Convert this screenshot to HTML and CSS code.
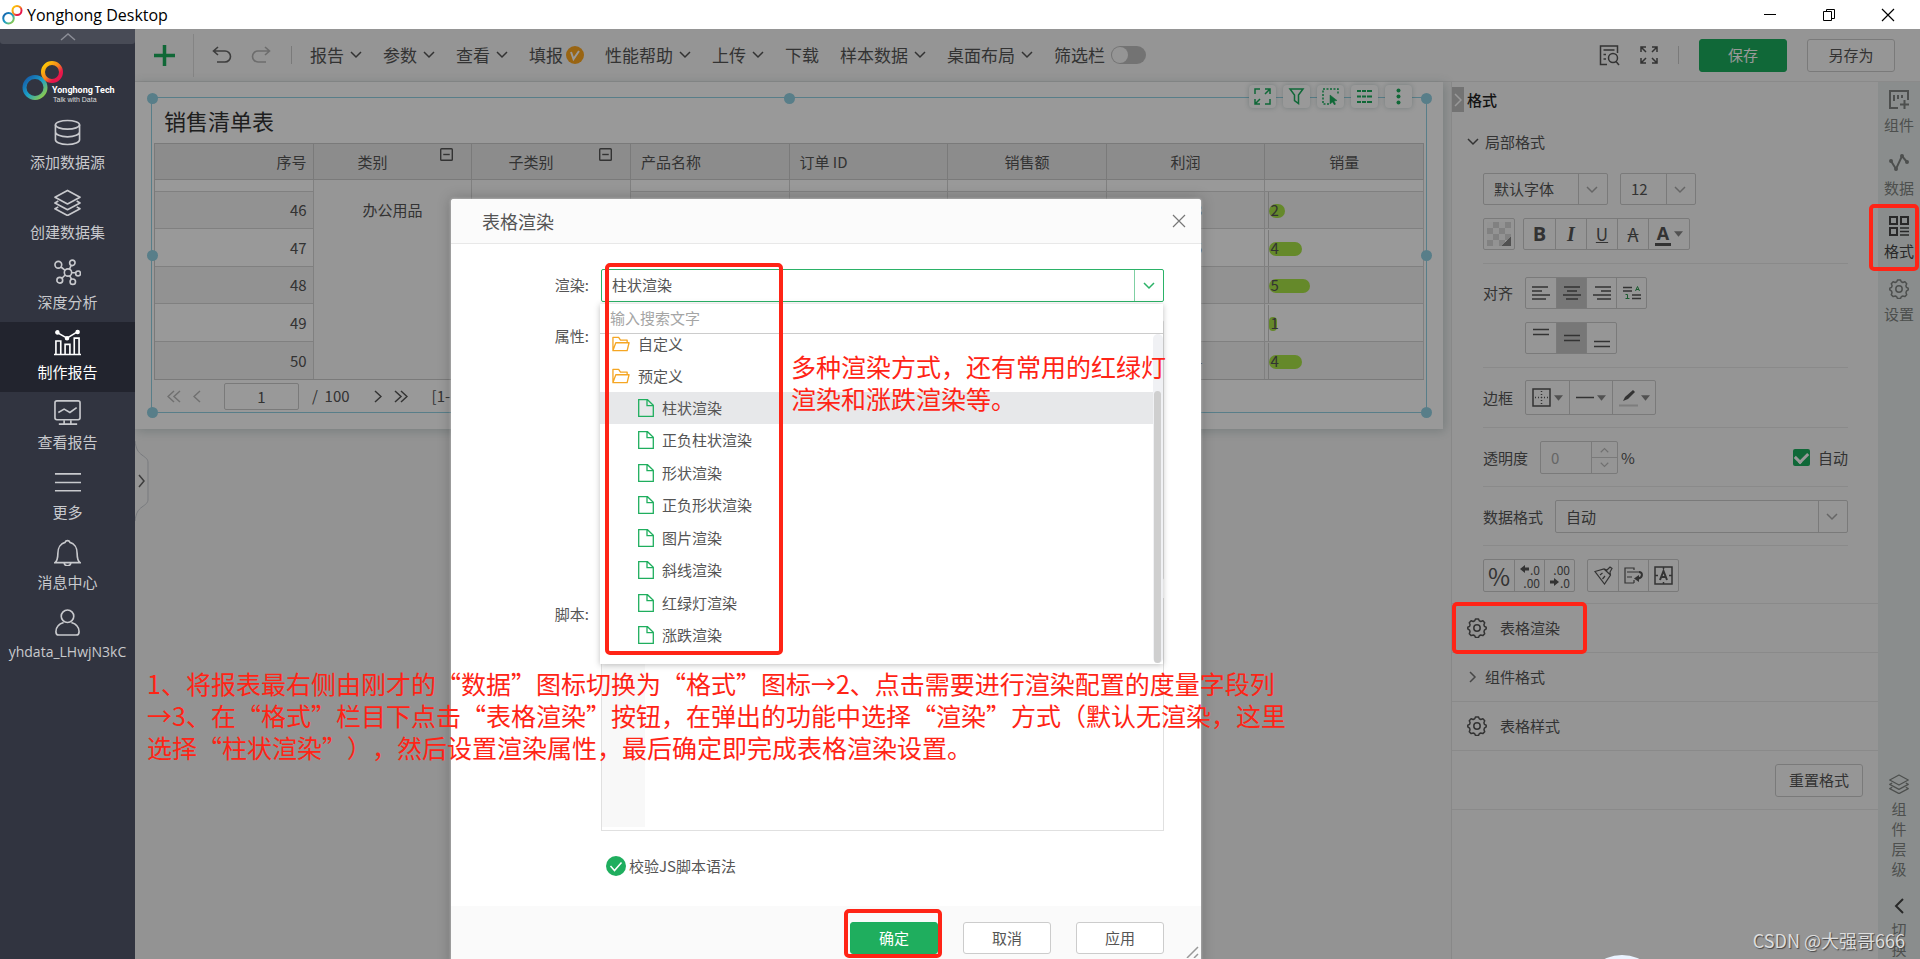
FILE: index.html
```html
<!DOCTYPE html>
<html lang="zh-CN">
<head>
<meta charset="utf-8">
<title>Yonghong Desktop</title>
<link rel="stylesheet" href="styles.css">
</head>
<body>
<svg class="defs" aria-hidden="true">
  <defs>
    <linearGradient id="warm" x1="0" y1="0" x2="1" y2="1"><stop offset="0" stop-color="#ffd400"/><stop offset=".5" stop-color="#f58220"/><stop offset=".75" stop-color="#e6174b"/><stop offset="1" stop-color="#e6174b"/></linearGradient>
    <linearGradient id="cool" x1="0" y1="0" x2="1" y2="1"><stop offset="0" stop-color="#1556a6"/><stop offset=".5" stop-color="#1ba0c8"/><stop offset="1" stop-color="#a4d233"/></linearGradient>
    <symbol id="rings" viewBox="0 0 42 40"><circle cx="13" cy="26.500" r="10.500" fill="none" stroke="url(#cool)" stroke-width="4"/><circle cx="30" cy="11" r="9" fill="none" stroke="url(#warm)" stroke-width="4"/></symbol>
    <symbol id="down" viewBox="0 0 12 8"><path d="M1 1l5 5 5-5" fill="none" stroke="currentColor" stroke-width="1.500"/></symbol>
    <symbol id="tri" viewBox="0 0 10 6"><path d="M0 0h10L5 6z" fill="#888"/></symbol>
    <symbol id="gear" viewBox="0 0 20 20"><path d="M7.700 2.800 8.600.9h2.800l.9 1.900 1.500.7 2.100-.7 1.800 2-.8 2 .5 1.600 1.800.8v1.700l-1.800 1.200-.4 1.600.7 2-1.900 1.900-2-.6-1.500.7-.9 1.900H8.600l-.9-1.900-1.500-.7-2 .6-1.900-1.900.7-2-.4-1.600-1.800-1.200V9.200l1.800-.8.5-1.600-.8-2 1.800-2 2.100.7z" fill="none" stroke="currentColor" stroke-width="1.500" stroke-linejoin="round"/><circle cx="10" cy="10" r="3.200" fill="none" stroke="currentColor" stroke-width="1.500"/></symbol>
    <symbol id="file" viewBox="0 0 16 18"><path d="M.7.7H9.500l5.800 5.600v11H.7zM9 .7v6h6.300" fill="none" stroke="#1fae5e" stroke-width="1.300"/></symbol>
    <symbol id="folder" viewBox="0 0 19 16"><path d="M1 15V1h6l2 3h7v3M1 15l3-8.300h14L16 15z" fill="none" stroke="#f5a623" stroke-width="1.400" stroke-linejoin="round"/></symbol>
    <symbol id="layers" viewBox="0 0 28 28"><path d="M14 1.500l13 7-13 7-13-7zM4.500 12.500L1 14.500l13 7 13-7-3.500-2M4.500 18.500L1 20.500l13 7 13-7-3.500-2" fill="none" stroke="currentColor" stroke-width="1.700" stroke-linejoin="round"/></symbol>
    <symbol id="minus" viewBox="0 0 14 14"><rect x=".75" y=".75" width="12.500" height="12.500" rx="1" fill="none" stroke="#555" stroke-width="1.500"/><path d="M3.500 7h7" stroke="#555" stroke-width="1.500"/></symbol>
  </defs>
</svg>

<header class="titlebar">
  <svg class="titlebar-logo"><use href="#rings"/></svg>
  <h1 class="titlebar-name">Yonghong Desktop</h1>
  <div class="window-buttons">
    <button aria-label="最小化"><svg width="14" height="14"><path d="M1 6.500h12" stroke="#000"/></svg></button>
    <button aria-label="还原"><svg width="14" height="14"><path d="M1.500 3.500h8v9h-8zM4.500 3.500v-2h8v9h-3" fill="none" stroke="#000"/></svg></button>
    <button aria-label="关闭"><svg width="14" height="14"><path d="M1 1l12 12M13 1L1 13" stroke="#000" stroke-width="1.200"/></svg></button>
  </div>
</header>

<div class="app">
  <nav class="sidebar">
    <button class="sidebar-fold" aria-label="收起"><svg width="16" height="8"><path d="M1 7l7-6 7 6" fill="none" stroke="#8b8d96" stroke-width="1.500"/></svg></button>
    <svg class="brand" viewBox="0 0 135 68" role="img" aria-label="Yonghong Tech">
      <use href="#rings" x="22" y="17" width="42" height="40"/>
      <text x="52" y="49" class="brand-name">Yonghong Tech</text>
      <text x="53" y="58" class="brand-motto">Talk with Data</text>
    </svg>
    <a class="nav-item" href="#"><svg viewBox="0 0 28 28"><ellipse cx="14" cy="6" rx="12.500" ry="4.500"/><path d="M1.500 6v15.500c0 2.500 5 5 12.500 5s12.500-2.500 12.500-5V6M1.500 13.500c0 2.500 5 5 12.500 5s12.500-2.500 12.500-5"/></svg><span>添加数据源</span></a>
    <a class="nav-item" href="#"><svg><use href="#layers"/></svg><span>创建数据集</span></a>
    <a class="nav-item" href="#"><svg viewBox="0 0 28 28"><circle cx="14.500" cy="14" r="3.800"/><circle cx="4.500" cy="6" r="3.500"/><circle cx="19" cy="4" r="2.800"/><circle cx="25" cy="15" r="2.500"/><circle cx="19.500" cy="23.500" r="2.800"/><circle cx="6" cy="22" r="3"/><path d="M7.200 8.300l4.400 3.400M17.800 6.600l-1.800 4M18.300 14.300h4.200M16.200 17.300l2 3.700M11.600 16.600L8.200 20"/></svg><span>深度分析</span></a>
    <a class="nav-item nav-active" href="#"><svg viewBox="0 0 28 28"><path d="M0 26.500h28M2 26V12.500h5V26M11.500 26V16h5v10M21 26V9.500h5V26M3 3.500l10.500 6L25 2.500"/><circle cx="3.500" cy="3.500" r="1.500" fill="#fff"/><circle cx="13.500" cy="9.500" r="1.500" fill="#fff"/><circle cx="24.500" cy="3" r="1.500" fill="#fff"/></svg><span>制作报告</span></a>
    <a class="nav-item" href="#"><svg viewBox="0 0 28 28"><rect x="1" y="2" width="26" height="19.500" rx="2"/><path d="M4.500 14l6-3.500 6 3.500 7-5M10.500 22v3.500M17.500 22v3.500M5 26h19"/></svg><span>查看报告</span></a>
    <a class="nav-item" href="#"><svg viewBox="0 0 28 28"><path d="M1 5h27M1 14h27M1 22.500h27"/></svg><span>更多</span></a>
    <a class="nav-item" href="#"><svg viewBox="0 0 28 28"><path d="M1 24.500c2.500-2 3-4 3-9.500 0-6 3-10.500 7.500-11.500a2.600 2.600 0 0 1 5 0C21 4.500 24 9 24 15c0 5.500.5 7.500 3 9.500zM10.500 25a3.600 3.600 0 0 0 7 0"/></svg><span>消息中心</span></a>
    <a class="nav-item" href="#"><svg viewBox="0 0 28 28"><circle cx="14" cy="7.500" r="6.500"/><path d="M10 14c-5 1.500-8 5-8 9.500 0 2.500 1 3.500 3 3.500h18c2 0 3-1 3-3.500 0-4.500-3-8-8-9.500"/></svg><span class="user">yhdata_LHwjN3kC</span></a>
  </nav>

  <div class="workspace">
    <div class="toolbar">
      <button class="tool-add" aria-label="新建"><svg width="21" height="21"><path d="M10.500 0v21M0 10.500h21" stroke="#1bad5d" stroke-width="3.500"/></svg></button>
      <button class="tool-undo" aria-label="撤销"><svg width="20" height="18"><path d="M6 1L1.500 5 6 9M1.500 5H13a5.500 5.500 0 0 1 0 11H5" fill="none" stroke="#666" stroke-width="1.600"/></svg></button>
      <button class="tool-redo" aria-label="重做"><svg width="20" height="18"><path d="M14 1l4.500 4L14 9M18.500 5H7a5.500 5.500 0 0 0 0 11h8" fill="none" stroke="#b5b5b5" stroke-width="1.600"/></svg></button>
      <div class="menus">
        <button>报告<svg class="chev"><use href="#down"/></svg></button>
        <button>参数<svg class="chev"><use href="#down"/></svg></button>
        <button>查看<svg class="chev"><use href="#down"/></svg></button>
        <button class="menu-vip">填报<svg width="18" height="18"><circle cx="9" cy="9" r="9" fill="#ffa820"/><path d="M5 6l2.500 7L13 5" fill="none" stroke="#fff" stroke-width="2"/></svg></button>
        <button>性能帮助<svg class="chev"><use href="#down"/></svg></button>
        <button>上传<svg class="chev"><use href="#down"/></svg></button>
        <button>下载</button>
        <button>样本数据<svg class="chev"><use href="#down"/></svg></button>
        <button>桌面布局<svg class="chev"><use href="#down"/></svg></button>
        <label class="switch">筛选栏<input type="checkbox" role="switch"></label>
      </div>
      <div class="toolbar-end">
        <button aria-label="预览"><svg width="21" height="21" fill="none" stroke="#555" stroke-width="1.500"><path d="M18.500 8V1h-17v18.500H8M4.500 5h11M4.500 9.500H7M4.500 14H7"/><circle cx="14" cy="13" r="4.500"/><path d="M17 16.500l3 3.500"/></svg></button>
        <button aria-label="全屏"><svg width="18" height="18" fill="none" stroke="#555" stroke-width="1.500"><path d="M1 6V1h5M1 1l5 5M12 1h5v5M17 1l-5 5M1 12v5h5M1 17l5-5M12 17h5v-5M17 17l-5-5"/></svg></button>
        <i class="tool-rule"></i>
        <button class="btn btn-primary">保存</button>
        <button class="btn">另存为</button>
      </div>
    </div>

    <div class="stage">
      <main class="canvas">
        <div class="sheet">
          <section class="widget">
            <i class="grip g-nw"></i><i class="grip g-n"></i><i class="grip g-ne"></i><i class="grip g-w"></i><i class="grip g-e"></i><i class="grip g-sw"></i><i class="grip g-se"></i>
            <div class="widget-tools">
              <button aria-label="放大"><svg width="17" height="17"><path d="M1 6V1h5M11 1h5v5M16 1l-5 5M1 11v5h5M1 16l5-5M11 16h5v-5"/></svg></button>
              <button aria-label="筛选"><svg width="17" height="17"><path d="M2 1h13l-4.500 6v8.500l-4-3V7z"/></svg></button>
              <button aria-label="选择"><svg width="17" height="17"><path d="M7 16H1V1h15v5" stroke-dasharray="2 1.500"/><path d="M8 7v9l2.500-2 2 3 1-1-1.500-3 3-.5z" fill="#1bad5d" stroke-width=".5"/></svg></button>
              <button aria-label="列表"><svg width="17" height="17"><path d="M1 3h4M6 3h4M11 3h5M1 8.500h4M6 8.500h4M11 8.500h5M1 14h4M6 14h4M11 14h5" stroke-width="2"/></svg></button>
              <button aria-label="更多"><svg width="17" height="17" class="dots"><circle cx="8.500" cy="2.500" r="2"/><circle cx="8.500" cy="8.500" r="2"/><circle cx="8.500" cy="14.500" r="2"/></svg></button>
            </div>
            <h2 class="widget-title">销售清单表</h2>
            <table class="grid">
              <thead>
                <tr><th class="end">序号</th><th class="fold">类别<svg><use href="#minus"/></svg></th><th class="fold">子类别<svg><use href="#minus"/></svg></th><th class="start">产品名称</th><th class="start">订单 ID</th><th>销售额</th><th>利润</th><th>销量</th></tr>
              </thead>
              <tbody>
                <tr class="cut"><td></td><td rowspan="6" class="group">办公用品</td><td rowspan="6" class="group"></td><td></td><td></td><td></td><td></td><td></td></tr>
                <tr class="shade"><td class="end">46</td><td></td><td></td><td></td><td class="profit">3</td><td class="meter"><div><i style="width:16px"></i>2</div></td></tr>
                <tr><td class="end">47</td><td></td><td></td><td></td><td class="profit">5</td><td class="meter"><div><i style="width:33px"></i>4</div></td></tr>
                <tr class="shade"><td class="end">48</td><td></td><td></td><td></td><td></td><td class="meter"><div><i style="width:41px"></i>5</div></td></tr>
                <tr><td class="end">49</td><td></td><td></td><td></td><td></td><td class="meter"><div><i style="width:8px"></i>1</div></td></tr>
                <tr class="shade"><td class="end">50</td><td></td><td></td><td></td><td class="profit">4</td><td class="meter"><div><i style="width:33px"></i>4</div></td></tr>
              </tbody>
            </table>
            <div class="pager">
              <button class="dim" aria-label="首页"><svg width="14" height="13"><path d="M7 1L1 6.500 7 12M13 1L7 6.500l6 5.500"/></svg></button>
              <button class="dim" aria-label="上一页"><svg width="8" height="13"><path d="M7 1L1 6.500 7 12"/></svg></button>
              <input type="text" value="1" aria-label="页码">
              <span class="pages">/&nbsp; 100</span>
              <button aria-label="下一页"><svg width="8" height="13"><path d="M1 1l6 5.500L1 12"/></svg></button>
              <button aria-label="末页"><svg width="14" height="13"><path d="M1 1l6 5.500L1 12M7 1l6 5.500L7 12"/></svg></button>
              <span class="range">[1-</span>
            </div>
          </section>
        </div>
        <button class="drawer" aria-label="展开"><svg width="14" height="82"><path d="M0 1c1 8 3 11 7 14 4 3 6 4 6 8v36c0 4-2 5-6 8-4 3-6 6-7 14" fill="#f8f8f8" stroke="#c8cbd2"/><path d="M4 35l5 6-5 6" fill="none" stroke="#666" stroke-width="1.500"/></svg></button>
      </main>

      <aside class="panel">
        <div class="panel-head"><button class="panel-tab" aria-label="收起面板"><svg width="8" height="14"><path d="M1 1l6 6-6 6" fill="none" stroke="#fff" stroke-width="1.500"/></svg></button><h2>格式</h2></div>
        <button class="fold-row"><svg class="chev"><use href="#down"/></svg>局部格式</button>
        <div class="format">
          <div class="block block-font">
            <div class="line gap-12">
              <span class="pick w-font"><select aria-label="字体"><option>默认字体</option></select><svg class="chev"><use href="#down"/></svg></span>
              <span class="pick w-size"><select aria-label="字号"><option>12</option></select><svg class="chev"><use href="#down"/></svg></span>
            </div>
            <div class="line gap-8">
              <button class="swatch" aria-label="背景色"></button>
              <div class="seg">
                <button class="bold">B</button><button class="italic">I</button><button class="under">U</button><button class="strike">A</button><button class="color" aria-label="文字颜色"><span>A</span><svg class="tri"><use href="#tri"/></svg></button>
              </div>
            </div>
          </div>
          <div class="block block-align">
            <span class="label">对齐</span>
            <div class="stack">
              <div class="seg">
                <button aria-label="左对齐"><svg width="18" height="14"><path d="M0 1h16M0 5h10M0 9h18M0 13h14"/></svg></button><button class="on" aria-label="居中"><svg width="18" height="14"><path d="M1 1h16M4 5h10M0 9h18M3 13h12"/></svg></button><button aria-label="右对齐"><svg width="18" height="14"><path d="M2 1h16M8 5h10M0 9h18M4 13h14"/></svg></button><button aria-label="自动对齐"><svg width="18" height="14"><path d="M0 1.500h9M0 5h9M9 9h9M9 12.500h9"/><path d="M2.500 8.500h2v4M2.500 12.500h4M12.500 5l2-4.500L16.500 5M13 3.500h3" class="green"/></svg></button>
              </div>
              <div class="seg">
                <button aria-label="顶端"><svg width="16" height="20"><path d="M0 1.500h16M0 6.500h16"/></svg></button><button class="on" aria-label="中部"><svg width="16" height="20"><path d="M0 7.500h16M0 12.500h16"/></svg></button><button aria-label="底端"><svg width="16" height="20"><path d="M0 13.500h16M0 18.500h16"/></svg></button>
              </div>
            </div>
          </div>
          <div class="block">
            <span class="label">边框</span>
            <div class="seg seg-wide">
              <button aria-label="边框样式"><svg width="19" height="19"><path d="M1 1h17v17H1z"/><path d="M9.500 3v14M3 9.500h14" stroke-dasharray="1 2"/></svg><svg class="tri"><use href="#tri"/></svg></button><button aria-label="线型"><svg width="18" height="19"><path d="M0 9.500h18"/></svg><svg class="tri"><use href="#tri"/></svg></button><button aria-label="边框颜色"><svg width="19" height="19"><path d="M4 13l2-4 8-7 2 2-7 7z" fill="#555" stroke-width="0"/><path d="M0 17.500h19" class="pale"/></svg><svg class="tri"><use href="#tri"/></svg></button>
            </div>
          </div>
          <div class="block block-opacity">
            <label class="label" for="opacity">透明度</label>
            <span class="stepper"><input id="opacity" type="text" value="0" disabled><span class="steps"><svg class="chev up"><use href="#down"/></svg><svg class="chev"><use href="#down"/></svg></span></span>
            <span class="unit">%</span>
            <label class="auto"><input type="checkbox" checked>自动</label>
          </div>
          <div class="block block-data">
            <label class="label" for="fmt">数据格式</label>
            <span class="pick w-fill"><select id="fmt"><option>自动</option></select><svg class="chev"><use href="#down"/></svg></span>
          </div>
          <div class="block block-tools gap-12">
            <div class="seg">
              <button class="percent">%</button><button class="digits" aria-label="增加小数"><span><svg width="9" height="8"><path d="M0 4l5-4v2.500h4v3H5V8z"/></svg>.0</span><span>.00</span></button><button class="digits" aria-label="减少小数"><span>.00</span><span><svg width="9" height="8"><path d="M9 4L4 0v2.500H0v3h4V8z"/></svg>.0</span></button>
            </div>
            <div class="seg">
              <button aria-label="格式刷"><svg width="19" height="19"><path d="M1 5.500L10 3l3 1 3-3 2 1.500-2 3.500.5 3L10.500 18zM10 3l6.500 6M6 9l2.500-2M8.500 13l2.500-3" stroke-width="1.200"/></svg></button><button aria-label="换行"><svg width="20" height="19"><path d="M10 17H1V2h9v2M10 14v3M3 6h12M3 11h5" stroke-width="1.200"/><path d="M15 6c3.500 0 4.500 5-.5 6.500" stroke-width="2"/><path d="M15 9v7l-5-3.500z" class="solid"/></svg></button><button aria-label="自适应"><svg width="19" height="19"><path d="M1 1h17v17H1zM1 9.500h3M15 9.500h3M9.500 1v2M9.500 16v2"/><path d="M6 14l3.500-9L13 14M7.500 11h4" stroke-width="2"/></svg></button>
            </div>
          </div>
        </div>
        <button class="panel-row"><svg class="gear"><use href="#gear"/></svg>表格渲染</button>
        <button class="panel-row panel-fold"><svg width="8" height="12"><path d="M1 1l5 5-5 5" fill="none" stroke="#777" stroke-width="1.500"/></svg>组件格式</button>
        <button class="panel-row"><svg class="gear"><use href="#gear"/></svg>表格样式</button>
        <div class="panel-reset"><button class="btn">重置格式</button></div>
      </aside>

      <nav class="rail">
        <button><svg width="20" height="20" viewBox="0 0 20 20"><path d="M19 10V1H1v17h8M5 5v6M9 5v4M13 5v3M11 14.500h9M15.500 10v9"/></svg>组件</button>
        <button><svg width="20" height="20" viewBox="0 0 20 20"><path d="M2 8l5 8 6-13 5 6"/><circle cx="2" cy="8" r="1"/><circle cx="7" cy="16" r="1"/><circle cx="13" cy="3" r="1"/><circle cx="18" cy="9" r="1"/></svg>数据</button>
        <button class="rail-on"><svg width="20" height="20" viewBox="0 0 20 20"><path d="M1 1h7v7H1zM12 1h7v7h-7zM1 12h7v7H1z"/><path d="M11 12h9M11 15.500h9M11 19h9" stroke-width="1.500"/></svg>格式</button>
        <button><svg width="20" height="20"><use href="#gear"/></svg>设置</button>
        <div class="rail-low">
          <button class="tall"><svg width="20" height="20"><use href="#layers"/></svg><span>组件层级</span></button>
          <button class="tall"><svg width="10" height="16"><path d="M9 1L2 8l7 7" stroke="#444"/></svg><span>切换图</span></button>
        </div>
      </nav>
    </div>

    <div class="mask"></div>
    <i class="bubble"></i>

    <section class="dialog" role="dialog" aria-labelledby="dlg-title">
      <header class="dialog-head"><h2 id="dlg-title">表格渲染</h2><button aria-label="关闭对话框"><svg width="14" height="14"><path d="M1 1l12 12M13 1L1 13" stroke="#777" stroke-width="1.200"/></svg></button></header>
      <div class="form">
        <label for="render">渲染:</label>
        <div class="combo">
          <input id="render" type="text" value="柱状渲染"><button aria-label="展开选项"><svg class="chev"><use href="#down"/></svg></button>
          <div class="drop">
            <input class="drop-search" type="text" placeholder="输入搜索文字" aria-label="输入搜索文字">
            <ul class="tree">
              <li class="dir"><svg><use href="#folder"/></svg>自定义</li>
              <li class="dir"><svg><use href="#folder"/></svg>预定义</li>
              <li class="picked"><svg><use href="#file"/></svg>柱状渲染</li>
              <li><svg><use href="#file"/></svg>正负柱状渲染</li>
              <li><svg><use href="#file"/></svg>形状渲染</li>
              <li><svg><use href="#file"/></svg>正负形状渲染</li>
              <li><svg><use href="#file"/></svg>图片渲染</li>
              <li><svg><use href="#file"/></svg>斜线渲染</li>
              <li><svg><use href="#file"/></svg>红绿灯渲染</li>
              <li><svg><use href="#file"/></svg>涨跌渲染</li>
            </ul>
            <i class="scroll"></i>
          </div>
        </div>
        <span class="form-label">属性:</span>
        <div class="props"></div>
        <label for="script">脚本:</label>
        <div class="editor"><i class="gutter"></i><textarea id="script"></textarea></div>
        <button class="verify"><svg width="20" height="20"><circle cx="10" cy="10" r="10" fill="#1fae5e"/><path d="M4.500 10l4 4.500 7-8" fill="none" stroke="#fff" stroke-width="1.500"/></svg>校验JS脚本语法</button>
      </div>
      <footer class="dialog-foot"><button class="btn btn-primary">确定</button><button class="btn">取消</button><button class="btn">应用</button>
        <svg class="resize" width="14" height="12"><path d="M1 12L12 1M8 12l4-4" stroke="#999" stroke-width="1.500"/></svg></footer>
    </section>
  </div>
</div>

<i class="mark mark-list"></i><i class="mark mark-tab"></i><i class="mark mark-render"></i><i class="mark mark-ok"></i>
<p class="note note-kinds">多种渲染方式，还有常用的红绿灯<br>渲染和涨跌渲染等。</p>
<p class="note note-steps">1、将报表最右侧由刚才的“数据”图标切换为“格式”图标→2、点击需要进行渲染配置的度量字段列<br>→3、在“格式”栏目下点击“表格渲染”按钮，在弹出的功能中选择“渲染”方式（默认无渲染，这里<br>选择“柱状渲染”），然后设置渲染属性，最后确定即完成表格渲染设置。</p>
<p class="watermark">CSDN @大强哥666</p>
</body>
</html>
```

FILE: styles.css
```css
* { box-sizing: border-box; }
body {
  margin: 0;
  height: 100vh;
  display: flex;
  flex-direction: column;
  overflow: hidden;
  position: relative;
  background: #fff;
  color: #555;
  font: 15px/20px "Noto Sans CJK SC", sans-serif;
}
h1, h2, p, ul { margin: 0; padding: 0; font-weight: 400; }
ul { list-style: none; }
button, input, select, textarea { font: inherit; color: inherit; margin: 0; }
button { background: none; border: 0; padding: 0; display: flex; align-items: center; justify-content: center; white-space: nowrap; }
i { display: block; }
svg { flex: none; display: block; }
.defs { position: absolute; width: 0; height: 0; }
.chev { width: 12px; height: 8px; }
.tri { width: 9px; height: 6px; }

/* window title */
.titlebar { flex: none; height: 29px; display: flex; align-items: center; color: #000; padding: 0 9px 0 2px; }
.titlebar-logo { width: 21px; height: 20px; }
.titlebar-name { font: 16px/24px "Open Sans", sans-serif; padding-left: 4px; flex: 1; }
.window-buttons { display: flex; gap: 13px; }
.window-buttons button { width: 46px; height: 28px; }

.app { flex: 1; min-height: 0; display: flex; }

/* left navigation */
.sidebar { flex: none; width: 135px; background: #313440; color: #c8c9cd; }
.sidebar-fold { width: 100%; height: 15px; background: #484b56; border-radius: 0 0 3px 3px; }
.brand { width: 135px; height: 68px; }
.brand-name { font: bold 9px Roboto, sans-serif; fill: #fff; }
.brand-motto { font: 7px "Liberation Sans", sans-serif; fill: #ddd; }
.nav-item { height: 70px; padding-top: 7px; display: flex; flex-direction: column; align-items: center; gap: 6px; color: inherit; text-decoration: none; }
.nav-item svg { width: 27px; height: 27px; fill: none; stroke: currentColor; stroke-width: 1.700; }
.nav-active { background: #22242e; color: #fff; }
.user { font-size: 14px; font-family: "Open Sans", sans-serif; }

/* top toolbar */
.workspace { flex: 1; min-width: 0; position: relative; overflow: hidden; display: flex; flex-direction: column; background: #f6f6f6; }
.toolbar { flex: none; height: 53px; display: flex; align-items: center; background: #f8f8f8; border-bottom: 1px solid #e6e6e6; padding-right: 25px; font-size: 17px; }
.tool-add { width: 59px; height: 43px; border-right: 1px solid #ddd; }
.tool-undo { margin-left: 18px; }
.tool-redo { margin-left: 19px; padding-right: 20px; border-right: 1px solid #ccc; }
.menus { display: flex; align-items: center; gap: 21px; padding-left: 18px; }
.menus button { gap: 6px; }
.menus .menu-vip { gap: 3px; }
.switch { display: flex; align-items: center; gap: 6px; }
.switch input { appearance: none; width: 35px; height: 18px; border-radius: 9px; background: #c0c0c0; display: flex; }
.switch input::before { content: ""; width: 16px; height: 16px; border-radius: 8px; background: #f8f8f8; margin: 1px; }
.toolbar-end { margin-left: auto; display: flex; align-items: center; gap: 20px; font-size: 15px; }
.tool-rule { width: 1px; height: 18px; background: #ccc; }
.btn { min-width: 88px; height: 33px; border: 1px solid #ccc; border-radius: 3px; background: #fbfbfb; }
.btn-primary { background: #1bae5e; border-color: #1bae5e; color: #fff; }

/* report canvas */
.stage { flex: 1; min-height: 0; display: flex; }
.canvas { flex: 1; min-width: 0; padding-right: 8px; }
.sheet { background: #fff; padding: 15px 16px 16px; box-shadow: 2px 2px 10px rgba(60, 100, 100, .25); }
.widget { position: relative; border: 1px solid #93d2e4; padding: 0 2px; }
.grip { position: absolute; width: 11px; height: 11px; border-radius: 6px; background: #93d2e4; margin: -5px; }
.g-nw { left: 0; top: 0; } .g-n { left: 50%; top: 0; } .g-ne { left: 100%; top: 0; }
.g-w { left: 0; top: 50%; } .g-e { left: 100%; top: 50%; }
.g-sw { left: 0; top: 100%; } .g-se { left: 100%; top: 100%; }
.widget-tools { position: absolute; right: 14px; top: -13px; display: flex; gap: 7px; }
.widget-tools button { width: 27px; height: 23px; background: #fff; border-radius: 4px; box-shadow: 0 0 5px rgba(60, 100, 100, .3); }
.widget-tools svg { fill: none; stroke: #1bad5d; stroke-width: 1.500; }
.widget-tools .dots { fill: #1bad5d; stroke: none; }
.widget-title { font-size: 22px; line-height: 45px; padding-left: 10px; color: #333; }
.grid { width: 100%; table-layout: fixed; border-collapse: separate; border-spacing: 0; border: 1px solid #ccc; border-width: 1px 0 1px 1px; }
.grid th { height: 36px; background: #e9e9e9; border: 1px solid #ccc; border-width: 0 1px 1px 0; padding: 0 6px; font-weight: 400; position: relative; }
.grid td { height: 38px; border: 1px solid #d5d5d5; border-width: 0 1px 1px 0; padding: 0 6px; background: #fff; }
.grid .shade td { height: 37px; background: #f3f3f3; }
.grid .cut td { height: 12px; }
.grid .cut .group { background: #fafafa; vertical-align: top; text-align: center; padding-top: 20px; border-bottom: 0; }
.grid tbody tr:last-child td { border-bottom: 0; }
.grid .end { text-align: right; }
.grid .start { text-align: left; padding-left: 10px; }
.grid .fold { padding-right: 46px; }
.grid .fold svg { position: absolute; right: 18px; top: 4px; width: 13px; height: 13px; }
.grid .profit { text-align: right; padding-right: 62px; }
.grid td.meter { padding: 0 0 0 3px; }
.meter div { position: relative; border-left: 1px solid #ccc; height: 36px; line-height: 36px; padding-left: 1px; z-index: 0; }
.meter i { position: absolute; left: 0; top: 12px; height: 14px; border-radius: 7px; background: #a8e446; z-index: -1; }
.pager { height: 32px; display: flex; align-items: center; padding-left: 13px; }
.pager svg { fill: none; stroke: #555; stroke-width: 1.500; }
.pager .dim svg { stroke: #bbb; }
.pager input { width: 75px; height: 27px; border: 1px solid #ccc; border-radius: 2px; text-align: center; background: #fff; margin-left: 23px; }
.pager .dim + .dim { margin-left: 12px; }
.pages { padding: 0 24px 0 13px; }
.pager button + button { margin-left: 12px; }
.range { padding-left: 24px; }
.drawer { margin-top: 11px; }

/* format panel */
.panel { flex: none; width: 427px; background: #f8f8f8; border-left: 1px solid #e3e3e3; }
.panel-head { display: flex; align-items: center; gap: 3px; padding-top: 5px; color: #222; }
.panel-head h2 { font-size: 15px; font-weight: 500; }
.panel-tab { width: 12px; height: 25px; background: #c0c0c0; }
.fold-row { height: 60px; padding-left: 15px; gap: 6px; }
.format { padding: 1px 30px 0 31px; }
.block { display: flex; align-items: center; border-bottom: 1px solid #e6e6e6; padding: 12px 0; }
.block:last-child { border: 0; }
.block-font { flex-direction: column; align-items: stretch; gap: 13px; padding: 0 0 13px; }
.block-align { align-items: flex-start; padding: 13px 0; }
.block-align .label { line-height: 32px; }
.line { display: flex; }
.gap-12 { gap: 12px; }
.gap-8 { gap: 8px; }
.label { flex: none; padding-right: 12px; }
.stack { display: grid; gap: 13px; justify-items: start; }
.pick { display: flex; position: relative; height: 32px; border: 1px solid #ccc; border-radius: 2px; background: #fafafa; }
.pick select { appearance: none; border: 0; background: none; flex: 1; padding: 0 40px 0 10px; }
.pick .chev { position: absolute; right: 9px; top: 12px; color: #aaa; }
.pick::after { content: ""; position: absolute; right: 28px; top: 0; bottom: 0; width: 1px; background: #ccc; }
.w-font { width: 125px; }
.w-size { width: 76px; }
.pick.w-fill { flex: 1; height: 33px; }
.swatch { width: 32px; height: 32px; border: 1px solid #ccc; border-radius: 2px; background: linear-gradient(135deg, transparent 80%, #888 80%) content-box, repeating-conic-gradient(#d8d8d8 0 25%, #f5f5f5 0 50%) content-box 0 0 / 12px 12px; padding: 3px; }
.seg { display: flex; border: 1px solid #ccc; border-radius: 2px; background: #fafafa; }
.seg button { width: 30px; height: 30px; }
.seg button + button { border-left: 1px solid #ccc; }
.seg .on { background: #c6c6c6; }
.seg svg { fill: none; stroke: #555; stroke-width: 1.500; }
.seg .solid { fill: #555; stroke: none; }
.seg .tri { stroke: none; }
.seg .green { stroke: #2f9a50; stroke-width: 1; }
.seg .pale { stroke: #d0d0d0; stroke-width: 2; }
.line .seg button { width: 31px; }
.seg .bold { font: bold 20px/28px "Open Sans", sans-serif; }
.seg .italic { font: italic bold 20px/28px "Liberation Serif", serif; }
.seg .under { font-size: 17px; text-decoration: underline; }
.seg .strike { font-size: 18px; text-decoration: line-through; }
.line .seg .color { width: 41px; gap: 3px; }
.seg .color span { font: bold 18px/20px "Open Sans", sans-serif; border-bottom: 3px solid #555; padding: 0 2px; }
.seg-wide button, .seg-wide button + button { width: 43px; height: 33px; gap: 3px; }
.seg .percent { font-size: 24px; }
.seg .digits { flex-direction: column; align-items: flex-end; font-size: 12px; line-height: 13px; padding-right: 4px; }
.digits span { display: flex; align-items: center; gap: 1px; }
.seg .digits svg { fill: #555; stroke: none; }
.block-opacity { padding: 13px 0 12px; }
.block-data { padding: 13px 0 12px; }
.block-tools { padding: 13px 0 11px; }
.block-tools .seg button { height: 31px; }
.stepper { display: flex; width: 78px; height: 33px; border: 1px solid #ccc; border-radius: 2px; }
.stepper input { width: 50px; border: 0; background: none; padding-left: 10px; color: #aaa; }
.steps { flex: 1; border-left: 1px solid #ccc; display: grid; align-items: center; justify-items: center; color: #bbb; background: linear-gradient(#ccc, #ccc) 0 50% / 100% 1px no-repeat; }
.steps .chev { width: 9px; height: 6px; }
.steps .up { transform: rotate(180deg); }
.unit { padding-left: 3px; }
.auto { margin-left: auto; display: flex; align-items: center; gap: 8px; }
.auto input { appearance: none; width: 17px; height: 17px; border-radius: 2px; background: #1bae5e; display: grid; place-items: center; }
.auto input::before { content: ""; width: 10px; height: 6px; border: solid #fff; border-width: 0 0 3px 3px; transform: rotate(-45deg); margin-bottom: 3px; }
.panel-row { width: 100%; height: 49px; border-top: 1px solid #e6e6e6; justify-content: flex-start; gap: 13px; padding-left: 15px; }
.panel-fold { gap: 8px; padding-left: 17px; }
.gear { width: 20px; height: 20px; }
.panel-reset { border: solid #e6e6e6; border-width: 1px 0; height: 60px; display: flex; align-items: center; justify-content: flex-end; padding-right: 15px; }

/* right rail */
.rail { flex: none; width: 42px; background: #e6eceb; color: #808482; display: flex; flex-direction: column; padding-top: 8px; overflow: hidden; }
.rail button { flex-direction: column; gap: 5px; height: 63px; justify-content: flex-start; }
.rail svg { fill: none; stroke: currentColor; stroke-width: 2; }
.rail .rail-on { color: #444; }
.rail .rail-low { margin-top: auto; margin-bottom: -20px; }
.rail .tall { width: 42px; height: auto; padding-bottom: 19px; gap: 5px; }
.tall span { width: 15px; white-space: normal; }
.rail .tall:last-child { padding-bottom: 0; }

.mask { position: absolute; inset: 0; background: rgba(0, 0, 0, .4); }
.bubble { position: absolute; left: 1447px; bottom: -76px; width: 80px; height: 80px; border-radius: 40px; background: #eaf3ff; }

/* dialog */
.dialog { position: absolute; left: 316px; top: 170px; width: 750px; background: #fff; border-radius: 3px 3px 0 0; box-shadow: 0 0 3px rgba(255, 255, 255, .6), 0 0 14px rgba(0, 0, 0, .25); }
.dialog-head { height: 45px; display: flex; align-items: center; justify-content: space-between; padding: 0 15px 0 31px; background: #fbfbfb; border-bottom: 1px solid #e8e8e8; border-radius: 3px 3px 0 0; }
.dialog-head h2 { font-size: 18px; }
.form { display: grid; grid-template-columns: 138px 1fr; column-gap: 12px; row-gap: 18px; padding: 25px 37px 30px 0; }
.form label, .form-label { text-align: right; padding-top: 6px; }
.combo { position: relative; display: flex; height: 33px; border: 1px solid #2bb267; border-radius: 2px; }
.combo > input { flex: 1; border: 0; padding: 0 10px 2px; background: none; outline: 0; }
.combo > button { width: 29px; border-left: 1px solid #7fd0a3; color: #2bb267; }
.drop { position: absolute; left: -2px; right: 0; top: 34px; height: 360px; background: #fff; box-shadow: 0 1px 6px rgba(0, 0, 0, .25); z-index: 1; }
.drop-search { display: block; width: 100%; height: 30px; border: 0; border-bottom: 1px solid #ccc; padding: 0 10px 2px; background: #fff; }
.drop-search::placeholder { color: #a5a5a5; opacity: 1; }
.tree { padding-right: 9px; }
.tree li { height: 33px; display: flex; align-items: center; gap: 8px; padding: 0 0 1px 38px; }
.tree li:nth-child(odd) { height: 32px; }
.tree .dir { padding-left: 12px; }
.tree .dir:first-child { height: 26px; padding-bottom: 6px; }
.tree .dir:nth-child(2) { height: 32px; }
.tree svg { width: 16px; height: 18px; }
.tree .dir svg { width: 18px; height: 16px; }
.tree .picked { background: #e7e8ea; }
.scroll { position: absolute; right: 0; top: 30px; bottom: 1px; width: 10px; background: #f0f1f4; border-radius: 5px; padding: 57px 2px 0 1px; }
.scroll::before { content: ""; display: block; height: 100%; border-radius: 4px; background: #cfcfcf; }
.props { height: 260px; border: 1px solid #e0e0e0; border-radius: 2px; }
.editor { height: 233px; border: 1px solid #e0e0e0; display: flex; }
.gutter { width: 43px; margin-bottom: 3px; background: #f8f8f8; }
.editor textarea { flex: 1; border: 0; resize: none; background: none; }
.verify { grid-column: 2; justify-self: start; gap: 3px; margin: 7px 0 0 5px; }
.dialog-foot { position: relative; height: 60px; background: #fafafa; display: flex; justify-content: flex-end; gap: 25px; padding: 16px 37px 0 0; }
.dialog-foot .btn { background: #fff; height: 32px; }
.dialog-foot .btn-primary { background: #1fae5e; }
.resize { position: absolute; right: 1px; bottom: 8px; }

/* annotations */
.mark, .note, .watermark { position: absolute; z-index: 2; }
.mark { border: 4px solid #ff2416; border-radius: 5px; }
.mark-list { left: 605px; top: 263px; width: 178px; height: 392px; }
.mark-tab { left: 1869px; top: 204px; width: 50px; height: 67px; }
.mark-render { left: 1452px; top: 602px; width: 135px; height: 52px; }
.mark-ok { left: 844px; top: 909px; width: 98px; height: 49px; }
.note { font-size: 25px; line-height: 32px; color: #ff2416; white-space: nowrap; text-spacing-trim: space-all; }
.note-kinds { left: 791px; top: 350px; }
.note-steps { left: 147px; top: 667px; }
.watermark { right: 15px; bottom: 7px; font-size: 18px; line-height: 24px; color: #ddd; text-shadow: 1px 1px 1px #444; }
```
